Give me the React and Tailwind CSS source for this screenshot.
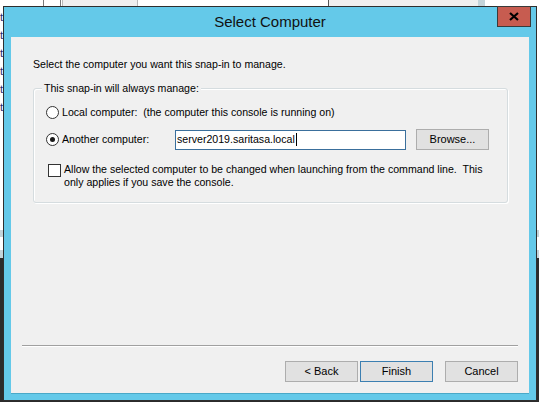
const FONT = { fontFamily: '"Liberation Sans", Arial, sans-serif' };

const Radio = ({ checked }) => (
  <div className="w-[13px] h-[13px] rounded-full border border-[#333333] bg-white flex items-center justify-center shrink-0">
    {checked && <div className="w-[5px] h-[5px] rounded-full bg-[#1a1a1a]" />}
  </div>
);

const WinButton = ({ label, primary }) => (
  <div
    className={`w-[73px] h-[21px] flex items-center justify-center bg-[#e1e1e1] border text-[11px] text-black ${
      primary ? "border-[#3c7fb1]" : "border-[#adadad]"
    }`}
  >
    {label}
  </div>
);

const Backdrop = () => (
  <div className="absolute inset-0 flex flex-col">
    <div className="h-[258px] bg-white flex flex-col relative overflow-hidden">
      {/* strip of the console behind, above the dialog */}
      <div className="h-[6px] flex">
        <div className="w-[43px]" />
        <div className="w-[1px] bg-[#7a7a7a]" />
        <div className="w-[16px]" />
        <div className="w-[1px] bg-[#7a7a7a]" />
        <div className="w-[1px]" />
        <div className="w-[76px] bg-[#efefef] border-l border-r border-[#b9b9b9]" />
        <div className="w-[190px]" />
        <div className="w-[1px] bg-[#555555]" />
        <div className="w-[149px] bg-[#efefef]" />
        <div className="w-[7px] bg-[#c4d4da]" />
        <div className="flex-1" />
      </div>
      <div className="flex flex-col pt-[2px] text-[11px] leading-[18px] text-[#1c2a6b]">
        {["t", "t", "t", "t", "t", "t"].map((t, i) => (
          <span key={i}>{t}</span>
        ))}
      </div>
      <div className="mt-auto h-[7px] bg-[#c4d4da]" />
      <div className="h-[13px]" />
      <div className="h-[8px] bg-[#c4d4da]" />
    </div>
    <div className="flex-1 bg-[#2b2b2b]" />
  </div>
);

export default function App() {
  return (
    <div className="w-[539px] h-[402px] relative overflow-hidden bg-[#2b2b2b]" style={FONT}>
      <Backdrop />

      <div className="absolute left-[3px] top-[6px] w-[534px] h-[395px] border border-[#2e2e2e] bg-[#64c9e9] flex flex-col px-[7px] pb-[7px]">
        <div className="h-[30px] flex items-center justify-center text-[15px] text-[#111111]">
          Select Computer
        </div>
        <div className="absolute -top-[1px] right-[5px] w-[34px] h-[21px] bg-[#c75c50] border border-[#3a3a3a] flex items-center justify-center">
          <svg width="10" height="9" viewBox="0 0 10 9">
            <path d="M1 1 L9 8 M9 1 L1 8" stroke="#000" strokeWidth="2.2" />
          </svg>
        </div>

        <div className="flex-1 bg-[#f0f0f0] flex flex-col text-[10.6px] text-black shadow-[0_1px_0_#4aa9c8]">
          <p className="mt-[21px] ml-[22px] h-[13px] leading-[13px]">
            Select the computer you want this snap-in to manage.
          </p>

          <div className="mt-[17px] ml-[22px] w-[475px] h-[115px] border border-[#d5dcdf] rounded-[3px] relative flex flex-col pl-[12px] shadow-[inset_1px_1px_0_#ffffff,1px_1px_0_#ffffff]">
            <span className="absolute -top-[7px] left-[8px] px-[2px] bg-[#f0f0f0] leading-[13px]">
              This snap-in will always manage:
            </span>

            <div className="mt-[17px] h-[13px] flex items-center gap-[3px]">
              <Radio />
              <span className="leading-[13px]">
                Local computer:&nbsp; (the computer this console is running on)
              </span>
            </div>

            <div className="mt-[10px] h-[21px] flex items-center">
              <Radio checked />
              <span className="ml-[3px] w-[113px] leading-[13px]">Another computer:</span>
              <div className="w-[231px] h-[20px] bg-white border border-[#3a6f9c] flex items-center pl-[1px] leading-[13px]">
                server2019.saritasa.local
                <span className="w-[1px] h-[13px] bg-black ml-[1px]" />
              </div>
              <div className="ml-[10px]">
                <WinButton label="Browse..." />
              </div>
            </div>

            <div className="mt-[14px] flex items-start pl-[2px]">
              <div className="w-[13px] h-[13px] border border-[#333333] bg-white shrink-0" />
              <p className="ml-[3px] leading-[13px] -mt-[1px]">
                Allow the selected computer to be changed when launching from the command line.&nbsp; This
                <br />
                only applies if you save the console.
              </p>
            </div>
          </div>

          <div className="mt-auto mx-[11px] h-[2px] border-t border-[#a0a0a0] border-b border-b-white" />

          <div className="mt-[14px] mb-[11px] pr-[11px] flex justify-end">
            <WinButton label="< Back" />
            <div className="ml-[2px]">
              <WinButton label="Finish" primary />
            </div>
            <div className="ml-[12px]">
              <WinButton label="Cancel" />
            </div>
          </div>
        </div>
      </div>
    </div>
  );
}
